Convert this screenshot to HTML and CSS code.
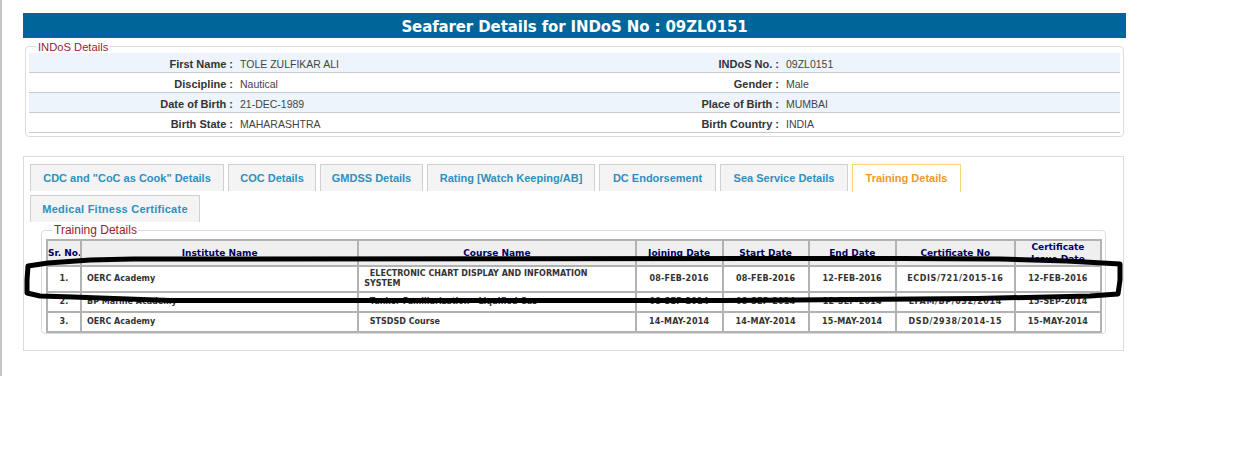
FILE: index.html
```html
<!DOCTYPE html>
<html lang="en">
  <head>
    <title>Seafarer Details</title>
    <meta charset="utf-8" />
    <link rel="stylesheet" href="styles.css">
  </head>
  <body>
    <div id="page">
      <div id="title">Seafarer Details for INDoS No : 09ZL0151</div>

      <fieldset class="box" id="indos">
        <legend>INDoS Details</legend>
        <table class="details">
          <colgroup>
            <col class="d-label"><col class="d-value"><col class="d-label2"><col class="d-value2">
          </colgroup>
          <tr class="alt">
            <th>First Name :</th><td>TOLE ZULFIKAR ALI</td>
            <th>INDoS No. :</th><td>09ZL0151</td>
          </tr>
          <tr>
            <th>Discipline :</th><td>Nautical</td>
            <th>Gender :</th><td>Male</td>
          </tr>
          <tr class="alt">
            <th>Date of Birth :</th><td>21-DEC-1989</td>
            <th>Place of Birth :</th><td>MUMBAI</td>
          </tr>
          <tr>
            <th>Birth State :</th><td>MAHARASHTRA</td>
            <th>Birth Country :</th><td>INDIA</td>
          </tr>
        </table>
      </fieldset>

      <div id="panel">
        <ul class="tabs">
          <li class="t-cdc">CDC and "CoC as Cook" Details</li>
          <li class="t-coc">COC Details</li>
          <li class="t-gmdss">GMDSS Details</li>
          <li class="t-rating">Rating [Watch Keeping/AB]</li>
          <li class="t-dc">DC Endorsement</li>
          <li class="t-sea">Sea Service Details</li>
          <li class="t-training active">Training Details</li>
          <li class="t-medical">Medical Fitness Certificate</li>
        </ul>

        <fieldset class="box" id="training">
          <legend>Training Details</legend>
          <table class="grid">
            <colgroup>
              <col class="c-sr"><col class="c-inst"><col class="c-course"><col class="c-date">
              <col class="c-start"><col class="c-date"><col class="c-cert"><col class="c-issue">
            </colgroup>
            <tr class="head">
              <th class="nowrap">Sr. No.</th>
              <th>Institute Name</th>
              <th>Course Name</th>
              <th>Joining Date</th>
              <th>Start Date</th>
              <th>End Date</th>
              <th>Certificate No</th>
              <th>Certificate<br>Issue Date</th>
            </tr>
            <tr class="r1">
              <td class="mid">1.</td>
              <td>OERC Academy</td>
              <td>&nbsp;&nbsp;ELECTRONIC CHART DISPLAY AND INFORMATION<br>SYSTEM</td>
              <td class="mid">08-FEB-2016</td>
              <td class="mid">08-FEB-2016</td>
              <td class="mid">12-FEB-2016</td>
              <td class="mid cert">ECDIS/721/2015-16</td>
              <td class="mid">12-FEB-2016</td>
            </tr>
            <tr class="r2">
              <td class="mid">2.</td>
              <td>BP Marine Academy</td>
              <td>&nbsp;&nbsp;Tanker Familiarization - Liquified Gas</td>
              <td class="mid">08-SEP-2014</td>
              <td class="mid">08-SEP-2014</td>
              <td class="mid">12-SEP-2014</td>
              <td class="mid cert">LFAM/BP/032/2014</td>
              <td class="mid">15-SEP-2014</td>
            </tr>
            <tr class="r3">
              <td class="mid">3.</td>
              <td>OERC Academy</td>
              <td>&nbsp;&nbsp;STSDSD Course</td>
              <td class="mid">14-MAY-2014</td>
              <td class="mid">14-MAY-2014</td>
              <td class="mid">15-MAY-2014</td>
              <td class="mid cert">DSD/2938/2014-15</td>
              <td class="mid">15-MAY-2014</td>
            </tr>
          </table>
        </fieldset>
      </div>
    </div>

    <!-- marker ring drawn over the first row -->
    <svg id="ink" width="1233" height="460" viewBox="0 0 1233 460">
      <path d="M133 259 L90 260 L48 263 L28 266 L27 280 L27 293 L40 296 L73 297 L100 298 L170 300.5 L720 300.5 L977 298.5 L1090 296 L1118 294 L1120 280 L1120 264 L1067 261 L1000 259 L900 258.5 L133 259" />
    </svg>
  </body>
</html>
```

FILE: styles.css
```css
html {
  height: 100%;
}
body {
  margin: 0;
  padding: 0;
  background: #fff;
  color: #333;
  font-family: "Liberation Sans", Arial, sans-serif;
  font-size: 11px;
}

#page {
  width: 1103px;
  height: 363px;
  padding: 13px 107px 0 21px;
  border-left: 2px solid #c4c4c4;
}

#title {
  height: 25px;
  background: #006699;
  color: #fff;
  text-align: center;
  letter-spacing: -0.12px;
  font: bold 15px/28px "DejaVu Sans", Verdana, sans-serif;
}

.box {
  margin: 0;
  padding: 0;
  border: 1px solid #dcdcdc;
  border-radius: 4px;
  min-width: 0;
  box-sizing: border-box;
}
.box legend {
  padding: 0 1px 0 2px;
  color: #9b1c2c;
  font-size: 11px;
  line-height: 13px;
}

#indos {
  width: 1099px;
  height: 97px;
  margin: 2px 0 0 2px;
  padding: 0 3px;
}
#indos legend {
  margin-left: 7px;
  padding-top: 1px;
  font-size: 11.2px;
  line-height: 12px;
}

.details {
  width: 1091px;
  border-collapse: collapse;
  table-layout: fixed;
}
.d-label { width: 204px; }
.d-value { width: 367px; }
.d-label2 { width: 179px; }
.d-value2 { width: 341px; }

.details th,
.details td {
  height: 17px;
  padding: 2px 0 0;
  border-bottom: 1px solid #c8ccd0;
}
.details th {
  text-align: right;
  color: #333;
  font-size: 11px;
}
.details td {
  padding-left: 7px;
  color: #444;
  font-size: 10.5px;
}
.details .alt {
  background: #edf4fb;
}

#panel {
  height: 193px;
  margin-top: 19px;
  margin-right: 2px;
  border: 1px solid #dcdcdc;
}

.tabs {
  display: flex;
  flex-wrap: wrap;
  gap: 4px;
  list-style: none;
  margin: 0;
  padding: 7px 100px 0 6px;
}
.tabs li {
  height: 26px;
  box-sizing: content-box;
  background: #f4f4f4;
  border: 1px solid #d0d0d0;
  border-bottom: 0;
  color: #2f8fbf;
  text-align: center;
  font-size: 11px;
  font-weight: bold;
  line-height: 27px;
}
.t-cdc { width: 192px; }
.t-coc { width: 86px; }
.t-gmdss { width: 101px; }
.t-rating { width: 166px; }
.t-dc { width: 115px; }
.t-sea { width: 126px; }
.t-training { width: 107px; }
.t-medical { width: 168px; letter-spacing: 0.25px; }

.tabs .active {
  height: 27px;
  margin-bottom: -1px;
  background: #fff;
  border-color: #f5d67a;
  color: #ee9a2e;
}

#training {
  width: 1065px;
  height: 111px;
  margin: 1px 0 0 17px;
  padding: 2px 3px 0 4px;
}
#training legend {
  margin-left: 6px;
  padding-top: 1px;
  font-size: 12px;
  line-height: 13px;
}

.grid {
  width: 1056px;
  table-layout: fixed;
  border-collapse: collapse;
  border: 2px solid #b2b2b2;
  font: bold 8px "DejaVu Sans", Verdana, sans-serif;
}
.c-sr { width: 34px; }
.c-inst { width: 277px; }
.c-course { width: 277px; }
.c-date { width: 87px; }
.c-start { width: 86px; }
.c-cert { width: 119px; }
.c-issue { width: 86px; }

.grid th,
.grid td {
  padding: 0 5px;
  border: 2px solid #b2b2b2;
  overflow: hidden;
}
.grid th {
  padding: 0;
  background: #efefef;
  color: #000066;
  font-size: 9px;
  line-height: 12px;
}
.grid .nowrap {
  white-space: nowrap;
}
.grid td {
  color: #333;
  line-height: 10px;
}
.grid .mid {
  text-align: center;
  letter-spacing: 0.2px;
}
.grid .cert {
  letter-spacing: 0.6px;
}
.grid .head {
  height: 26px;
}
.grid .r1 {
  height: 26px;
}
.grid .r2,
.grid .r3 {
  height: 20px;
}

#ink {
  position: absolute;
  top: 0;
  left: 0;
  pointer-events: none;
}
#ink path {
  fill: none;
  stroke: #000;
  stroke-width: 5;
  stroke-linejoin: round;
}
```
